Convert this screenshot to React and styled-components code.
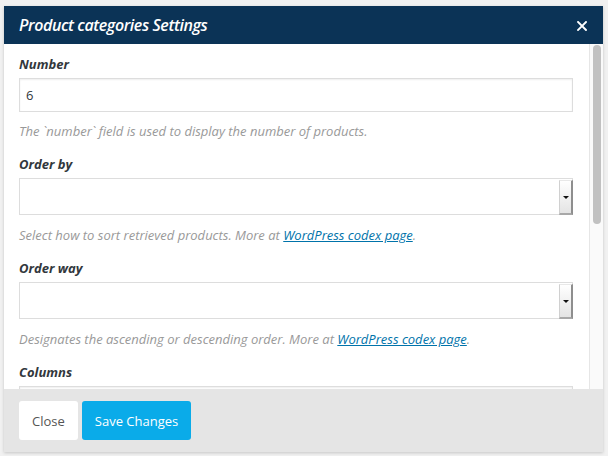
import React from "react";
import styled, { createGlobalStyle } from "styled-components";

const COLORS = {
    page: "#f1f1f1",
    navy: "#0b3356",
    white: "#ffffff",
    label: "#32373c",
    hint: "#999999",
    link: "#0073aa",
    border: "#dddddd",
    footer: "#e5e5e5",
    blue: "#0aabe9",
};

const GlobalStyle = createGlobalStyle`
    html, body {
        margin: 0;
        padding: 0;
        background: ${COLORS.page};
        font-family: "Open Sans", "Liberation Sans", sans-serif;
    }
`;

const fields = [
    { label: "Number", type: "input", value: "6", hint: "The `number` field is used to display the number of products." },
    { label: "Order by", type: "select", hint: "Select how to sort retrieved products. More at ", link: true },
    { label: "Order way", type: "select", hint: "Designates the ascending or descending order. More at ", link: true },
    { label: "Columns", type: "input", value: "" },
];

const CloseIcon = () => (
    <svg width="10" height="10" viewBox="0 0 10 10">
        <path d="M1 1 L9 9 M9 1 L1 9" stroke="#fff" strokeWidth="1.9" strokeLinecap="square" />
    </svg>
);

const Field = ({ field }) => (
    <FieldBox>
        <Label>{field.label}</Label>
        {field.type === "input" ? (
            <TextInput type="text" defaultValue={field.value} />
        ) : (
            <SelectWrap>
                <Select defaultValue="" />
                <SelectArrow>
                    <Triangle />
                </SelectArrow>
            </SelectWrap>
        )}
        {field.hint && (
            <Hint $gap={field.type === "select" ? 11 : 10}>
                {field.hint}
                {field.link && (
                    <>
                        <Link href="#">WordPress codex page</Link>.
                    </>
                )}
            </Hint>
        )}
    </FieldBox>
);

const App = () => {
    return (
        <>
            <GlobalStyle />
            <Backdrop>
                <Modal>
                    <Header>
                        <Title>Product categories Settings</Title>
                        <CloseBtn>
                            <CloseIcon />
                        </CloseBtn>
                    </Header>
                    <Body>
                        <Content>
                            {fields.map((f) => (
                                <Field key={f.label} field={f} />
                            ))}
                        </Content>
                        <ScrollTrack>
                            <ScrollThumb />
                        </ScrollTrack>
                    </Body>
                    <Footer>
                        <Button>Close</Button>
                        <Button $primary>Save Changes</Button>
                    </Footer>
                </Modal>
            </Backdrop>
        </>
    );
};

const Backdrop = styled.div`
    width: 608px;
    height: 456px;
    padding: 6px 5px 4px 4px;
    box-sizing: border-box;
    background: ${COLORS.page};
`;

const Modal = styled.div`
    width: 599px;
    height: 446px;
    display: flex;
    flex-direction: column;
    background: ${COLORS.white};
    box-shadow: 0 1px 3px rgba(0, 0, 0, 0.18);
    overflow: hidden;
`;

const Header = styled.div`
    height: 38px;
    flex: none;
    display: flex;
    align-items: center;
    justify-content: space-between;
    background: ${COLORS.navy};
    padding: 0 16px 0 15px;
`;

const Title = styled.h1`
    margin: 0;
    color: ${COLORS.white};
    font-size: 16px;
    font-style: italic;
    font-weight: 600;
    letter-spacing: -0.4px;
`;

const CloseBtn = styled.button`
    border: none;
    background: none;
    padding: 0;
    display: flex;
    margin-top: 2px;
    cursor: pointer;
`;

const Body = styled.div`
    flex: 1;
    min-height: 0;
    display: flex;
`;

const Content = styled.div`
    flex: 1;
    overflow: hidden;
    padding: 11px 16px 0 15px;
`;

const ScrollTrack = styled.div`
    flex: none;
    width: 14px;
    box-sizing: border-box;
    background: #fafafa;
    border-left: 1px solid #e6e6e6;
    padding: 1px 2px 0 3px;
`;

const ScrollThumb = styled.div`
    height: 179px;
    border-radius: 4px;
    background: #c1c1c1;
`;

const FieldBox = styled.div`
    & + & {
        margin-top: 15px;
    }
`;

const Label = styled.div`
    font-size: 13px;
    line-height: 18px;
    font-weight: 700;
    font-style: italic;
    color: ${COLORS.label};
    margin-bottom: 5px;
`;

const TextInput = styled.input`
    display: block;
    width: 100%;
    height: 34px;
    box-sizing: border-box;
    border: 1px solid ${COLORS.border};
    box-shadow: inset 0 1px 2px rgba(0, 0, 0, 0.07);
    padding: 0 6px;
    font-family: inherit;
    font-size: 13px;
    color: #32373c;
    outline: none;
`;

const SelectWrap = styled.div`
    position: relative;
    height: 37px;
`;

const Select = styled.select`
    appearance: none;
    width: 100%;
    height: 100%;
    box-sizing: border-box;
    border: 1px solid ${COLORS.border};
    background: ${COLORS.white};
    outline: none;
`;

const SelectArrow = styled.div`
    position: absolute;
    top: 2px;
    right: 0;
    bottom: 0;
    width: 14px;
    box-sizing: border-box;
    background: linear-gradient(#ffffff, #e4e4e4);
    border-left: 1px solid #d0d0d0;
    border-top: 1px solid #e8e8e8;
    border-right: 2px solid #8e8e8e;
    border-bottom: 2px solid #a8a8a8;
    display: flex;
    align-items: center;
    justify-content: center;
`;

const Triangle = styled.div`
    width: 0;
    height: 0;
    border-left: 3px solid transparent;
    border-right: 3px solid transparent;
    border-top: 3px solid #111;
    margin-top: 1px;
`;

const Hint = styled.p`
    margin: ${(p) => p.$gap}px 0 0;
    font-size: 13px;
    line-height: 18px;
    font-style: italic;
    color: ${COLORS.hint};
`;

const Link = styled.a`
    color: ${COLORS.link};
    text-decoration: underline;
`;

const Footer = styled.div`
    flex: none;
    height: 63px;
    box-sizing: border-box;
    padding: 12px 15px;
    display: flex;
    gap: 4px;
    background: ${COLORS.footer};
`;

const Button = styled.button`
    height: 39px;
    padding: 0 13px;
    border: none;
    border-radius: 3px;
    font-family: inherit;
    font-size: 13px;
    color: ${(p) => (p.$primary ? COLORS.white : "#555")};
    background: ${(p) => (p.$primary ? COLORS.blue : COLORS.white)};
    cursor: pointer;
`;

export default App;
